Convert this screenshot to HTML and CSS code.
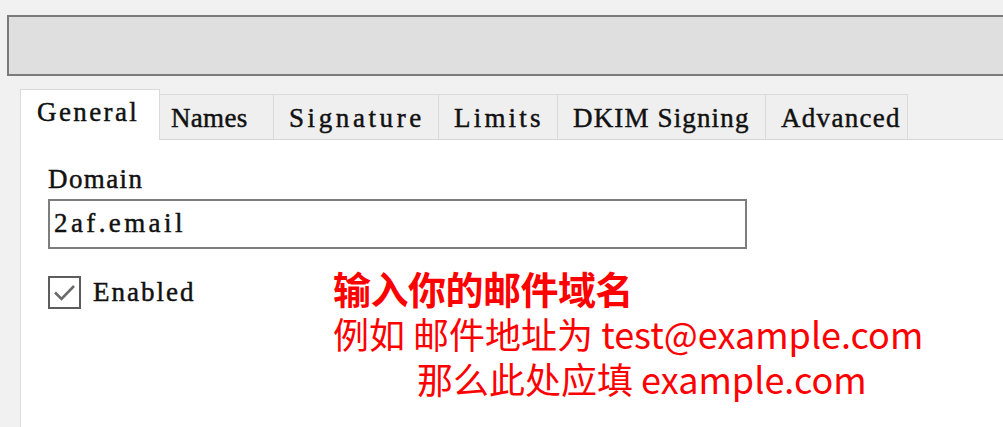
FILE: index.html
```html
<!DOCTYPE html>
<html lang="zh">
<head>
<meta charset="utf-8">
<title>Domain</title>
<link rel="stylesheet" href="styles.css">
</head>
<body>
<div class="app">
  <div class="topbar"></div>
  <div class="dialog">
    <div class="tabs">
      <div class="tab tab-general active">General</div>
      <div class="tab tab-names">Names</div>
      <div class="tab tab-signature">Signature</div>
      <div class="tab tab-limits">Limits</div>
      <div class="tab tab-dkim">DKIM Signing</div>
      <div class="tab tab-advanced">Advanced</div>
    </div>
    <div class="panel">
      <div class="label">Domain</div>
      <div class="input">2af.email</div>
      <div class="row">
        <div class="check">
          <span class="box">
            <svg width="29" height="29" viewBox="0 0 29 29"><path d="M5 14.5 L11.5 21 L24 8" fill="none" stroke="#6a6a6a" stroke-width="2.6"/></svg>
          </span>
          <span class="check-label">Enabled</span>
        </div>
        <div class="note">
          <div class="note-title">输入你的邮件域名</div>
          <div class="note-line">例如 邮件地址为 test@example.com</div>
          <div class="note-line indent">那么此处应填 example.com</div>
        </div>
      </div>
    </div>
  </div>
</div>
</body>
</html>
```
FILE: styles.css
```css
html, body {
  margin: 0;
  padding: 0;
}
body {
  width: 1003px;
  height: 427px;
  overflow: hidden;
  background: #f1f1f1;
  font-family: "Liberation Serif", "Noto Sans CJK SC", serif;
  color: #111;
}
.app {
  display: flex;
  flex-direction: column;
  height: 427px;
}
.topbar {
  margin: 15px 0 0 7px;
  height: 57px;
  background: #dfdfdf;
  border: 2px solid #7b7b7b;
  border-right: none;
}
.dialog {
  margin: 14px 0 0 20px;
  flex: 1;
  display: flex;
  flex-direction: column;
}
.tabs {
  display: flex;
  align-items: flex-end;
  height: 50px;
  border-bottom: 1px solid #d6d6d6;
  box-sizing: border-box;
}
.tab,
.label,
.input,
.check-label {
  -webkit-text-stroke: 0.45px #111;
}
.tab {
  box-sizing: border-box;
  height: 45px;
  background: #efefef;
  border: 1px solid #dadada;
  border-left: none;
  border-bottom: none;
  font-size: 27px;
  letter-spacing: 2.4px;
  line-height: 40px;
  padding: 3px 0 0 15px;
  white-space: nowrap;
}
.tab.active {
  height: 51px;
  margin-bottom: -1px;
  background: #fff;
  border-left: 1px solid #dadada;
  line-height: 44px;
  padding: 0 0 0 16px;
  position: relative;
}
.tab-general { width: 140px; }
.tab-names { width: 114px; padding-left: 11px; letter-spacing: 0.3px; }
.tab-signature { width: 165px; letter-spacing: 3.6px; }
.tab-limits { width: 119px; letter-spacing: 3.2px; }
.tab-dkim { width: 208px; letter-spacing: 1.15px; }
.tab-advanced { width: 142px; letter-spacing: 1.3px; }
.panel {
  flex: 1;
  background: #fff;
  border-left: 1px solid #dcdcdc;
  padding: 24px 0 0 27px;
}
.label {
  font-size: 27px;
  letter-spacing: 1.4px;
  line-height: 30px;
  height: 30px;
}
.input {
  box-sizing: border-box;
  margin-top: 5px;
  width: 699px;
  height: 50px;
  border: 2px solid #7d7d7d;
  background: #fff;
  font-size: 27px;
  letter-spacing: 3.4px;
  line-height: 44px;
  padding-left: 4px;
}
.row {
  display: flex;
  align-items: flex-start;
  margin-top: 27px;
}
.check {
  display: flex;
  align-items: center;
  width: 285px;
  flex: none;
}
.box {
  box-sizing: border-box;
  width: 33px;
  height: 33px;
  border: 2px solid #5c5c5c;
  display: flex;
  align-items: center;
  justify-content: center;
  background: #fff;
}
.box svg { display: block; }
.check-label {
  margin-left: 12px;
  font-size: 27px;
  letter-spacing: 2px;
  line-height: 33px;
}
.note {
  margin-top: -11px;
  color: #ff0000;
  font-family: "Noto Sans CJK SC", "Noto Sans", sans-serif;
}
.note-title {
  font-size: 38px;
  font-weight: bold;
  line-height: 46px;
  letter-spacing: -0.5px;
}
.note-line {
  font-size: 36px;
  line-height: 45px;
}
.indent {
  padding-left: 84px;
}
```
